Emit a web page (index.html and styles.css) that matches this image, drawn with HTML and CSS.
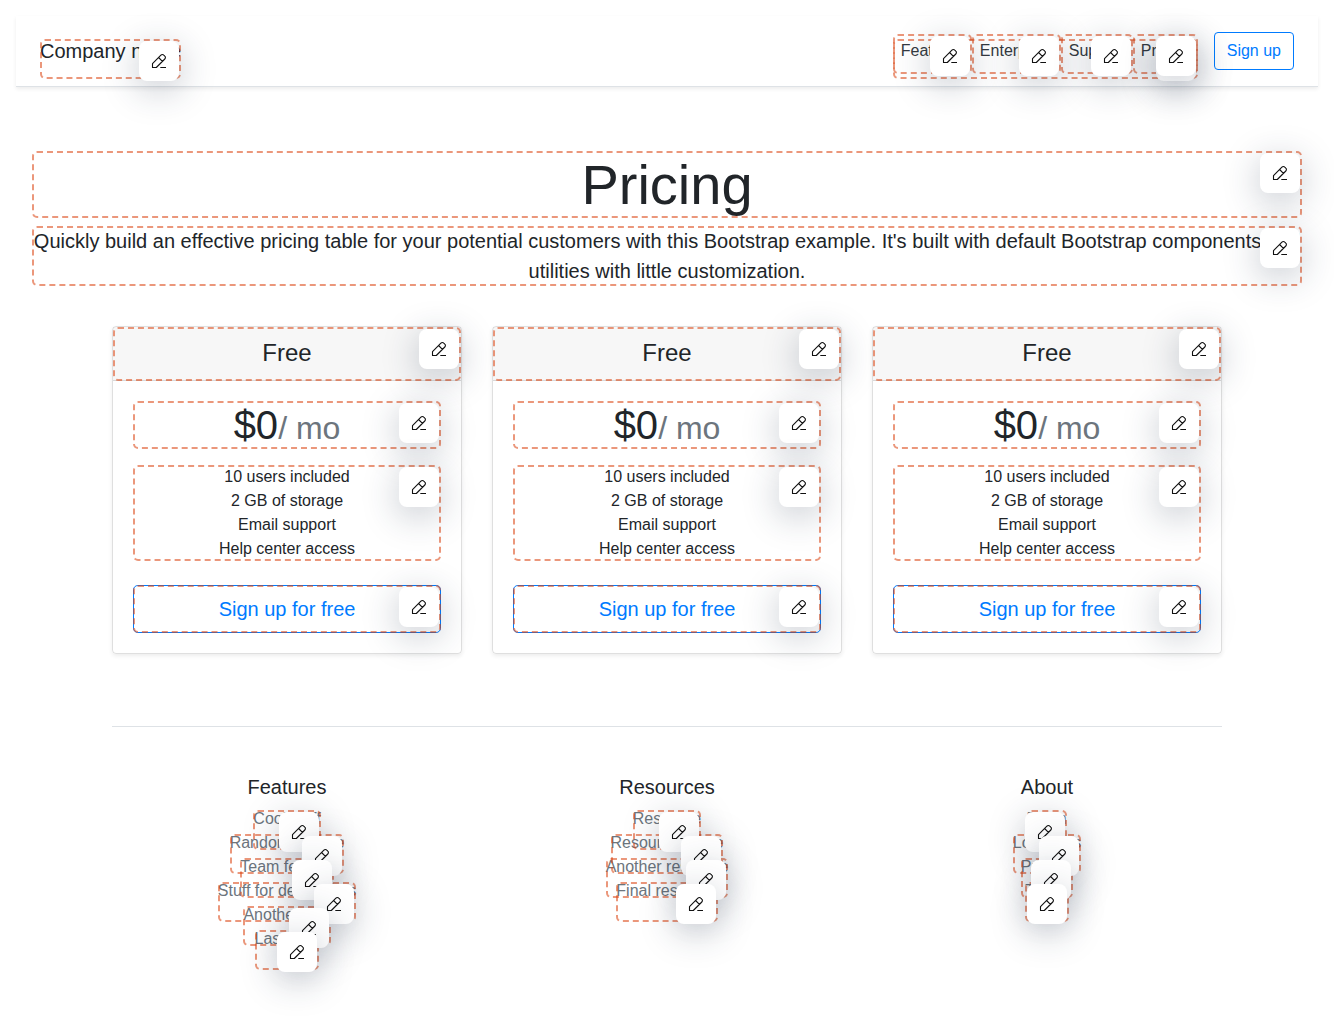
FILE: index.html
```html
<!DOCTYPE html>
<html lang="en">
<head>
<meta charset="utf-8">
<title>Pricing</title>
<link rel="stylesheet" href="styles.css">
</head>
<body>
<svg class="sprite" width="0" height="0" aria-hidden="true">
  <symbol id="pen" viewBox="0 0 16 16">
    <path d="M1.5 14.5V10.7L9.9 2.1a2 2 0 0 1 2.9 0l1 1a2 2 0 0 1 0 2.9L5.3 14.5ZM7.6 4.5l3.8 3.8M9.3 14.5H15"/>
  </symbol>
</svg>
<header class="topbar">
  <h5 class="brand editable">Company name</h5>
  <nav class="nav editable"><a class="editable">Features</a><a class="editable">Enterprise</a><a class="editable">Support</a><a class="editable">Pricing</a></nav>
  <a class="btn">Sign up</a>
</header>
<section class="intro">
  <h1 class="editable">Pricing</h1>
  <p class="editable">Quickly build an effective pricing table for your potential customers with this Bootstrap example. It's built with default Bootstrap components and utilities with little customization.</p>
</section>
<main class="container">
  <div class="deck"></div>
  <footer class="footer">
    <div class="col"><h5>Features</h5><ul>
      <li><a class="editable">Cool stuff</a></li>
      <li><a class="editable">Random feature</a></li>
      <li><a class="editable">Team feature</a></li>
      <li><a class="editable">Stuff for developers</a></li>
      <li><a class="editable">Another one</a></li>
      <li><a class="editable">Last time</a></li></ul></div>
    <div class="col"><h5>Resources</h5><ul>
      <li><a class="editable">Resource</a></li>
      <li><a class="editable">Resource name</a></li>
      <li><a class="editable">Another resource</a></li>
      <li><a class="editable">Final resource</a></li></ul></div>
    <div class="col"><h5>About</h5><ul>
      <li><a class="editable">Team</a></li>
      <li><a class="editable">Locations</a></li>
      <li><a class="editable">Privacy</a></li>
      <li><a class="editable">Terms</a></li></ul></div>
  </footer>
</main>
<script src="app.js"></script>
</body>
</html>
```
FILE: styles.css
```css
*, *::before, *::after { box-sizing: border-box; }
body {
  margin: 0;
  min-height: 1031px;
  padding: 16px;
  font: 400 16px/1.5 "Liberation Sans", Arial, sans-serif;
  color: #212529;
  background: #fff;
}
h1, h4, h5, p, ul { margin: 0; padding: 0; font-weight: 500; }
p, ul { font-weight: 400; }
ul { list-style: none; }
h5 { font-size: 20px; line-height: 1.2; }
.sprite { position: absolute; }

.topbar {
  display: flex;
  align-items: center;
  padding: 16px 24px;
  margin-bottom: 16px;
  background: #fff;
  border-bottom: 1px solid #dee2e6;
  box-shadow: 0 2px 4px rgba(0, 0, 0, .075);
}
.brand { margin-right: auto; font-weight: 400; }
.nav { margin-right: 16px; }
.nav a { padding: 8px; color: #343a40; }
.btn {
  display: block;
  padding: 6px 12px;
  text-align: center;
  color: #007bff;
  border: 1px solid #007bff;
  border-radius: 4px;
}
.btn-lg { padding: 8px 16px; font-size: 20px; border-radius: 4.8px; }

.intro { padding: 48px 16px 24px; text-align: center; }
.intro h1 { margin-bottom: 8px; font-size: 56px; line-height: 1.2; font-weight: 400; }
.intro p { margin-bottom: 16px; font-size: 20px; }

.container { width: 1110px; margin: 0 auto; }
.deck { display: flex; gap: 30px; margin-bottom: 72px; text-align: center; }
.card {
  flex: 1;
  border: 1px solid rgba(0, 0, 0, .125);
  border-radius: 4px;
  box-shadow: 0 2px 4px rgba(0, 0, 0, .075);
}
.card-header {
  padding: 12px 20px;
  background: rgba(0, 0, 0, .03);
  border-bottom: 1px solid rgba(0, 0, 0, .125);
}
.card-header h4 { font-size: 24px; line-height: 1.2; font-weight: 400; }
.card-body { padding: 20px; }
.price { font-size: 40px; line-height: 1.2; }
.price small { font-size: 80%; font-weight: 400; color: #6c757d; }
.perks { margin: 16px 0 24px; }

.footer {
  display: flex;
  padding-top: 48px;
  border-top: 1px solid #dee2e6;
  text-align: center;
}
.col { flex: 1; }
.col:first-child, .col:last-child { flex: 0 0 350px; }
.col h5 { margin-bottom: 8px; }
.col a { color: #6c757d; }

/* Editing overlay: dashed frame with a pencil button in its corner */
.editable { position: relative; }
.frame {
  position: absolute;
  z-index: 1;
  top: 0;
  left: 0;
  width: 100%;
  height: 100%;
  min-height: 40px;
  border: 2px dashed rgba(220, 70, 20, .56);
  border-radius: 5px;
}
.edit {
  position: absolute;
  z-index: 2;
  top: 2px;
  right: 2px;
  display: flex;
  align-items: center;
  justify-content: center;
  width: 40px;
  height: 40px;
  background: #fff;
  border-radius: 8px;
  box-shadow: 0 8px 36px rgba(33, 48, 73, .28);
}
.btn > .frame { top: -1px; left: -1px; width: calc(100% + 2px); height: calc(100% + 2px); }
.btn > .edit { top: 1px; right: 1px; }
.card-header > .frame { height: calc(100% + 1px); }
.edit svg { width: 16px; height: 16px; fill: none; stroke: #111; stroke-width: 1.1; stroke-linejoin: round; }
```
FILE: app.js
```js
const deck = document.querySelector('.deck');
for (let i = 0; i < 3; i++) {
  deck.insertAdjacentHTML('beforeend', `
    <div class="card">
      <div class="card-header editable"><h4>Free</h4></div>
      <div class="card-body">
        <div class="price editable">$0<small>/ mo</small></div>
        <ul class="perks editable">
          <li>10 users included</li><li>2 GB of storage</li><li>Email support</li><li>Help center access</li>
        </ul>
        <a class="btn btn-lg editable">Sign up for free</a>
      </div>
    </div>`);
}
document.querySelectorAll('.editable').forEach(el => {
  el.insertAdjacentHTML('afterbegin',
    '<span class="frame"></span><span class="edit"><svg><use href="#pen"/></svg></span>');
});
```
